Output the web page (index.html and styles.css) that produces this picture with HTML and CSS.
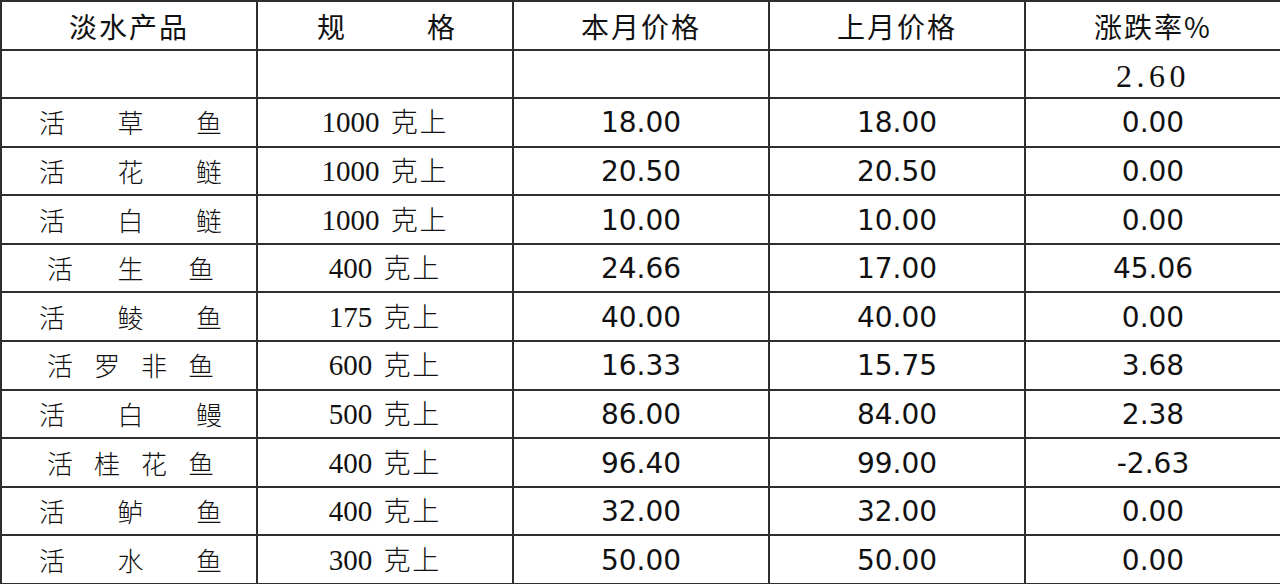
FILE: index.html
```html
<!DOCTYPE html>
<html lang="zh">
<head>
<meta charset="utf-8">
<title>淡水产品价格</title>
<link rel="stylesheet" href="styles.css">
</head>
<body>
<table class="price-table">
  <colgroup><col><col><col><col><col></colgroup>
  <thead>
    <tr class="head-row">
      <th><span class="head-text">淡水产品</span></th>
      <th><div class="spread spread-head"><span>规</span><span>格</span></div></th>
      <th><span class="head-text">本月价格</span></th>
      <th><span class="head-text">上月价格</span></th>
      <th><span class="head-text">涨跌率%</span></th>
    </tr>
  </thead>
  <tbody>
    <tr class="row">
      <td></td><td></td><td></td><td></td>
      <td class="avg">2.60</td>
    </tr>
    <tr class="row">
      <td><div class="spread wide"><span>活</span><span>草</span><span>鱼</span></div></td>
      <td class="spec">1000 <span class="unit">克上</span></td>
      <td class="num">18.00</td><td class="num">18.00</td><td class="num">0.00</td>
    </tr>
    <tr class="row">
      <td><div class="spread wide"><span>活</span><span>花</span><span>鲢</span></div></td>
      <td class="spec">1000 <span class="unit">克上</span></td>
      <td class="num">20.50</td><td class="num">20.50</td><td class="num">0.00</td>
    </tr>
    <tr class="row">
      <td><div class="spread wide"><span>活</span><span>白</span><span>鲢</span></div></td>
      <td class="spec">1000 <span class="unit">克上</span></td>
      <td class="num">10.00</td><td class="num">10.00</td><td class="num">0.00</td>
    </tr>
    <tr class="row">
      <td><div class="spread narrow"><span>活</span><span>生</span><span>鱼</span></div></td>
      <td class="spec">400 <span class="unit">克上</span></td>
      <td class="num">24.66</td><td class="num">17.00</td><td class="num">45.06</td>
    </tr>
    <tr class="row">
      <td><div class="spread wide"><span>活</span><span>鲮</span><span>鱼</span></div></td>
      <td class="spec">175 <span class="unit">克上</span></td>
      <td class="num">40.00</td><td class="num">40.00</td><td class="num">0.00</td>
    </tr>
    <tr class="row">
      <td><div class="spread narrow"><span>活</span><span>罗</span><span>非</span><span>鱼</span></div></td>
      <td class="spec">600 <span class="unit">克上</span></td>
      <td class="num">16.33</td><td class="num">15.75</td><td class="num">3.68</td>
    </tr>
    <tr class="row">
      <td><div class="spread wide"><span>活</span><span>白</span><span>鳗</span></div></td>
      <td class="spec">500 <span class="unit">克上</span></td>
      <td class="num">86.00</td><td class="num">84.00</td><td class="num">2.38</td>
    </tr>
    <tr class="row">
      <td><div class="spread narrow"><span>活</span><span>桂</span><span>花</span><span>鱼</span></div></td>
      <td class="spec">400 <span class="unit">克上</span></td>
      <td class="num">96.40</td><td class="num">99.00</td><td class="num">-2.63</td>
    </tr>
    <tr class="row">
      <td><div class="spread wide"><span>活</span><span>鲈</span><span>鱼</span></div></td>
      <td class="spec">400 <span class="unit">克上</span></td>
      <td class="num">32.00</td><td class="num">32.00</td><td class="num">0.00</td>
    </tr>
    <tr class="row">
      <td><div class="spread wide"><span>活</span><span>水</span><span>鱼</span></div></td>
      <td class="spec">300 <span class="unit">克上</span></td>
      <td class="num">50.00</td><td class="num">50.00</td><td class="num">0.00</td>
    </tr>
  </tbody>
</table>
</body>
</html>
```

FILE: styles.css
```css
html, body {
  margin: 0;
  padding: 0;
  background: #ffffff;
}

.price-table {
  width: 1280px;
  table-layout: fixed;
  border-collapse: collapse;
  border: 2px solid #2e2e2e;
  color: #111;
}

.price-table col {
  width: 256px;
}

.price-table th,
.price-table td {
  border: 2px solid #2e2e2e;
  padding: 0;
  text-align: center;
  vertical-align: middle;
  overflow: hidden;
  white-space: nowrap;
}

.head-row {
  height: 48.5px;
}

.row {
  height: 48.6px;
}

.price-table th {
  font-family: "Noto Sans CJK SC", sans-serif;
  font-weight: 400;
  font-size: 28px;
  line-height: 1;
  padding-top: 2px;
}

.head-text {
  letter-spacing: 2px;
}

.spread {
  display: flex;
  justify-content: space-between;
  font-family: "Noto Sans CJK SC", sans-serif;
  font-weight: 300;
  font-size: 26px;
  line-height: 1;
}

.spread-head {
  padding: 0 57px 0 59px;
  font-weight: 400;
  font-size: 28px;
}

.wide {
  padding: 0 34px 0 37px;
}

.narrow {
  padding: 0 42px 0 45px;
}

.spec {
  font-family: "Liberation Serif", serif;
  font-size: 29px;
  line-height: 1;
}

.unit {
  font-family: "Noto Sans CJK SC", sans-serif;
  font-weight: 300;
  font-size: 27px;
  letter-spacing: 2px;
  margin-left: 4px;
}

.num {
  font-family: "DejaVu Sans", sans-serif;
  font-size: 28px;
  line-height: 1;
  padding-top: 2px !important;
}

.avg {
  font-family: "Liberation Serif", serif;
  font-size: 32px;
  letter-spacing: 4.5px;
  line-height: 1;
  padding-top: 5px !important;
}
```
